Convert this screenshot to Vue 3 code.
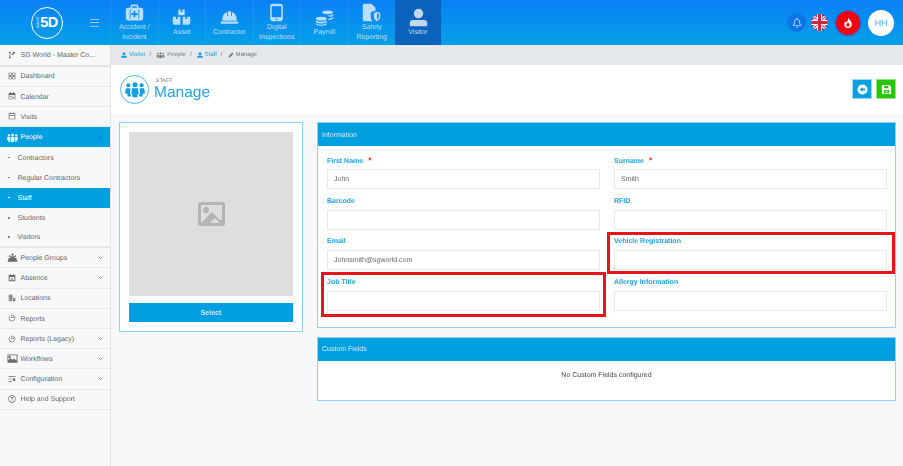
<script setup>
const icons = {
  case: 'M9 2h6a2 2 0 0 1 2 2v2h3a3 3 0 0 1 3 3v10a3 3 0 0 1-3 3H4a3 3 0 0 1-3-3V9a3 3 0 0 1 3-3h3V4a2 2 0 0 1 2-2zm0 2v2h6V4zM6 8v12h1V8zm11 0v12h1V8zM11 10v3H8v2h3v3h2v-3h3v-2h-3v-3z',
  boxes: 'M8 2h3v3h2V2h3v7H8zM1 11h4v3h2v-3h3.5v10H3a2 2 0 0 1-2-2zm12.5 0H17v3h2v-3h4v8a2 2 0 0 1-2 2h-7.500z',
  hat: 'M10 4h4v6h1V5c3.500 1 6 4 6 9v2H3v-2c0-5 2.500-8 6-9v5h1zM1 17h22v3H1z',
  phone: 'M7 1h10a3 3 0 0 1 3 3v16a3 3 0 0 1-3 3H7a3 3 0 0 1-3-3V4a3 3 0 0 1 3-3zm-1 3v14h12V4zm6 15.500a1.200 1.200 0 1 0 0 2.400 1.200 1.200 0 0 0 0-2.400z',
  coins: 'M16 3c4 0 7 1 7 2.500S20 8 16 8s-7-1-7-2.500S12 3 16 3zm7 4.500V9c0 1-1.500 1.900-4 2.200-1-.8-2.500-1.300-4-1.500 3.500 0 6.500-.8 8-2.200zM8 11c4 0 7 1.100 7 2.500S12 16 8 16s-7-1.100-7-2.500S4 11 8 11zm-7 4.500C2.500 17 5 17.500 8 17.500s5.500-.5 7-2V17c0 1.400-3 2.500-7 2.500S1 18.400 1 17zm0 3.500c1.500 1.400 4 2 7 2s5.500-.6 7-2v1c0 1.400-3 2.500-7 2.500S1 21.400 1 20zM23 11v2c0 1-1.500 1.800-6 2.300v-2c3 0 5-.9 6-2.300z',
  safety: 'M3 1h9l5 5v3.500l-6 2.300V17c0 2 .7 4 2 6H3a2 2 0 0 1-2-2V3a2 2 0 0 1 2-2zm16 10 4 1.500V17c0 3-1.800 5-4 6-2.200-1-4-3-4-6v-4.500zm0 2v8c1.300-.8 2.300-2.200 2.300-4v-3.200z',
  person: 'M12 1a6 6 0 1 1 0 12 6 6 0 0 1 0-12zM5 15h14a4 4 0 0 1 4 4v4H1v-4a4 4 0 0 1 4-4z',
  people: 'M12 4a3 3 0 1 1 0 6 3 3 0 0 1 0-6zM4 5a2.500 2.500 0 1 1 0 5 2.500 2.500 0 0 1 0-5zm16 0a2.500 2.500 0 1 1 0 5 2.500 2.500 0 0 1 0-5zM8.500 11h7l1 7-1.500.5V22H9v-3.500L7.500 18zM1 11h5.500L6 18l1 .5V21H3v-3l-3-1zm16.500 0H23l1 6-3 1v3h-4v-2.500l1-.5z',
  branch: 'M3 2h5v5H6.500v10H8v5H3v-5h1.500V7H3zM14 3h7v2l-3 4h-2v3h-6v-2h4V9z',
  grid: 'M2 2h9v9H2zm2 2v5h5V4zM13 2h9v9h-9zm2 2v5h5V4zM2 13h9v9H2zm2 2v5h5v-5zM13 13h9v9h-9zm2 2v5h5v-5z',
  cal: 'M6 1h3v2h6V1h3v2h3a1 1 0 0 1 1 1v17a1 1 0 0 1-1 1H3a1 1 0 0 1-1-1V4a1 1 0 0 1 1-1h3zM4 9v11h16V9zm3 2h4v4H7zm6 3h4v4h-4z',
  visits: 'M6 1h2v3h8V1h2v3h4v18H2V4h4zM4 6v3h16V6zm0 5v9h16v-9z',
  groups: 'M12 3a2.500 2.500 0 1 1 0 5 2.500 2.500 0 0 1 0-5zM6 7a2 2 0 1 1 0 4 2 2 0 0 1 0-4zm12 0a2 2 0 1 1 0 4 2 2 0 0 1 0-4zM9 9h6l2 4h3l3 8H1l3-8h3z',
  absence: 'M6 1h3v2h6V1h3v2h4v19H2V3h4zM5 9v10h14V9zm4 2 3 2 3-2v2l-2 1.500 2 1.500v2l-3-2-3 2v-2l2-1.500L9 13z',
  loc: 'M2 2h11v20H2zm2 2v3h2V4zm4 0v3h2V4zM4 9v3h2V9zm4 0v3h2V9zm-4 5v6h2v-6zm4 0v6h2v-6zm7-3h7v11h-7zm2 2v2h3v-2zm0 4v2h3v-2z',
  report: 'M12 2a10 10 0 1 1-7 2.900L6.400 6.300A8 8 0 1 0 12 4v6h6v2h-8V2z',
  flow: 'M1 3h22v18H1zm2 2v11l5-5 4 4 3-3 6 5V5zm3 1a2.500 2.500 0 1 1 0 5 2.500 2.500 0 0 1 0-5z',
  config: 'M2 4h20v2H2zM2 11h10v2H2zM2 18h10v2H2zM18 10a4 4 0 1 1 0 8 4 4 0 0 1 0-8z',
  help: 'M12 1a11 11 0 1 1 0 22 11 11 0 0 1 0-22zm0 2a9 9 0 1 0 0 18 9 9 0 0 0 0-18zm0 3c2.500 0 4 1.400 4 3.300 0 2.700-3 2.800-3 5h-2c0-3.300 3-3.300 3-5 0-.8-.8-1.300-2-1.300s-2 .6-2 1.700H8C8 7.500 9.500 6 12 6zm-1 10h2v2h-2z',
  pencil: 'M17 2l5 5L8 21l-6 1 1-6z'
}

const modules = [
  { icon: 'case', label: ['Accident /', 'Incident'] },
  { icon: 'boxes', label: ['Asset'] },
  { icon: 'hat', label: ['Contractor'] },
  { icon: 'phone', label: ['Digital', 'Inspections'] },
  { icon: 'coins', label: ['Payroll'] },
  { icon: 'safety', label: ['Safety', 'Reporting'] },
  { icon: 'person', label: ['Visitor'], active: true }
]

const menu = [
  { icon: 'grid', label: 'Dashboard' },
  { icon: 'cal', label: 'Calendar' },
  { icon: 'visits', label: 'Visits' },
  { icon: 'people', label: 'People', arrow: true, open: true, wide: true },
  { sub: true, label: 'Contractors' },
  { sub: true, label: 'Regular Contractors' },
  { sub: true, label: 'Staff', open: true },
  { sub: true, label: 'Students' },
  { sub: true, label: 'Visitors', last: true },
  { icon: 'groups', label: 'People Groups', arrow: true, wide: true },
  { icon: 'absence', label: 'Absence', arrow: true },
  { icon: 'loc', label: 'Locations' },
  { icon: 'report', label: 'Reports' },
  { icon: 'report', label: 'Reports (Legacy)', arrow: true },
  { icon: 'flow', label: 'Workflows', arrow: true, wide: true },
  { icon: 'config', label: 'Configuration', arrow: true },
  { icon: 'help', label: 'Help and Support' }
]

const crumbs = [
  { icon: 'person', label: 'Visitor', link: true },
  { icon: 'people', label: 'People', wide: true },
  { icon: 'person', label: 'Staff', link: true },
  { icon: 'pencil', label: 'Manage', end: true }
]

const fields = [
  { label: 'First Name', value: 'John', required: true },
  { label: 'Surname', value: 'Smith', required: true },
  { label: 'Barcode', value: '' },
  { label: 'RFID', value: '' },
  { label: 'Email', value: 'Johnsmith@sgworld.com' },
  { label: 'Vehicle Registration', value: '', mark: 'mark-right' },
  { label: 'Job Title', value: '', mark: 'mark-left' },
  { label: 'Allergy Information', value: '' }
]
</script>

<template>
  <div class="page">
    <header class="topbar">
      <div class="brand">
        <div class="logo">
          <span class="logo-small">SMART</span>
          <span class="logo-big">5D</span>
        </div>
        <div class="burger"><i></i><i></i><i></i></div>
      </div>
      <nav class="modules">
        <a v-for="m in modules" :key="m.icon" class="module" :class="{ active: m.active }">
          <svg class="module-icon" viewBox="0 0 24 24"><path :d="icons[m.icon]" fill="currentColor" fill-rule="evenodd" /></svg>
          <span class="module-label"><span v-for="l in m.label" :key="l">{{ l }}</span></span>
        </a>
      </nav>
      <div class="top-right">
        <span class="bell">
          <svg width="10" height="11" viewBox="0 0 24 24"><path d="M12 1a2 2 0 0 1 2 2v.500c3.500 1 5.500 4 5.500 7.500 0 4 1 5.500 3 7.500v1.500h-21v-1.500c2-2 3-3.500 3-7.500 0-3.500 2-6.500 5.500-7.500V3a2 2 0 0 1 2-2zm0 4.500c-3 0-5 2.500-5 5.500 0 3-.5 5-1.500 7h13c-1-2-1.500-4-1.500-7 0-3-2-5.500-5-5.500zM9 21.500h6a3 3 0 0 1-6 0z" fill="#9fd0ff" fill-rule="evenodd" /></svg>
        </span>
        <svg class="flag" viewBox="0 0 16 16">
          <defs><clipPath id="flag-clip"><circle cx="8" cy="8" r="8" /></clipPath></defs>
          <g clip-path="url(#flag-clip)">
            <rect width="16" height="16" fill="#2b3a78" />
            <path d="M0 0 16 16M16 0 0 16" stroke="#fff" stroke-width="3" />
            <path d="M0 0 16 16M16 0 0 16" stroke="#d8233c" stroke-width="1" />
            <path d="M8 0V16M0 8H16" stroke="#fff" stroke-width="5" />
            <path d="M8 0V16M0 8H16" stroke="#d8233c" stroke-width="3" />
          </g>
        </svg>
        <span class="drop">
          <svg width="10" height="12" viewBox="0 0 24 28"><path d="M13 1c1 5 8 8 8 16a9 9 0 0 1-18 0c0-4 2-6 4-8 0 2 1 3 2 4 2-3 3-7 4-12zm-1 12c-1 2-4 3-4 6a4 4 0 0 0 8 0c0-3-3-4-4-6z" fill="#fff" fill-rule="evenodd" /></svg>
        </span>
        <span class="avatar">HH</span>
      </div>
    </header>

    <div class="below">
      <aside class="sidebar">
        <div class="company">
          <svg class="side-icon" viewBox="0 0 24 24"><path :d="icons.branch" fill="currentColor" /></svg>
          <span class="side-label">SG World - Master Co...</span>
        </div>
        <a
          v-for="item in menu"
          :key="item.label"
          class="side-row"
          :class="{ sub: item.sub, open: item.open, last: item.last }"
        >
          <span v-if="item.sub" class="dot"></span>
          <svg v-else class="side-icon" :class="{ wide: item.wide }" viewBox="0 0 24 24"><path :d="icons[item.icon]" fill="currentColor" fill-rule="evenodd" /></svg>
          <span class="side-label">{{ item.label }}</span>
          <svg v-if="item.arrow" class="chev" viewBox="0 0 10 6"><path d="M1 1l4 4 4-4" fill="none" stroke="currentColor" stroke-width="1.400" /></svg>
        </a>
      </aside>

      <main class="main">
        <div class="crumbs">
          <span v-for="c in crumbs" :key="c.label" class="crumb" :class="{ link: c.link }">
            <svg class="crumb-icon" :class="{ wide: c.wide }" viewBox="0 0 24 24"><path :d="icons[c.icon]" fill="currentColor" fill-rule="evenodd" /></svg>
            {{ c.label }}
            <em v-if="!c.end">/</em>
          </span>
        </div>

        <div class="page-head">
          <div class="head-icon">
            <svg width="20" height="20" viewBox="0 0 24 24"><path :d="icons.people" fill="#0d9fe0" /></svg>
          </div>
          <div class="head-text">
            <small>STAFF</small>
            <h1>Manage</h1>
          </div>
          <div class="head-actions">
            <button class="act back">
              <svg width="11" height="11" viewBox="0 0 24 24"><path d="M12 1a11 11 0 1 1 0 22 11 11 0 0 1 0-22zM12 7l-6 5 6 5v-3h6v-4h-6z" fill="#fff" fill-rule="evenodd" /></svg>
            </button>
            <button class="act save">
              <svg width="11" height="11" viewBox="0 0 24 24"><path d="M3 2h15l4 4v16H2V3a1 1 0 0 1 1-1zm4 2v5h9V4zM6 13v7h12v-7zm6 1.500a2 2 0 1 1 0 4 2 2 0 0 1 0-4z" fill="#fff" fill-rule="evenodd" /></svg>
            </button>
          </div>
        </div>

        <div class="content">
          <section class="photo-card">
            <div class="photo">
              <svg width="27" height="24" viewBox="0 0 27 24">
                <rect x="1.500" y="1.500" width="24" height="21" rx="1" fill="none" stroke="#b5b5b5" stroke-width="3" />
                <circle cx="8" cy="8" r="3" fill="#b5b5b5" />
                <path d="M3 21 14 10l8 8 3 0v4H3z" fill="#b5b5b5" />
                <path d="M12 21l5-5 5 5z" fill="#dedede" />
              </svg>
            </div>
            <button class="select-btn">Select</button>
          </section>

          <div class="forms">
            <section class="card">
              <div class="card-head">Information</div>
              <div class="form-grid">
                <div v-for="f in fields" :key="f.label" class="field">
                  <label>{{ f.label }}<b v-if="f.required">*</b></label>
                  <input type="text" :value="f.value" />
                  <span v-if="f.mark" class="mark" :class="f.mark"></span>
                </div>
              </div>
            </section>

            <section class="card">
              <div class="card-head">Custom Fields</div>
              <div class="custom-empty">No Custom Fields configured</div>
            </section>
          </div>
        </div>
      </main>
    </div>
  </div>
</template>

<style>
html, body { margin: 0; background: #f7f8fa; }
</style>

<style scoped>
.page {
  width: 903px;
  height: 466px;
  overflow: hidden;
  font-family: "Liberation Sans", Arial, sans-serif;
  font-size: 7px;
  color: #555;
  text-rendering: geometricPrecision;
  filter: blur(0.3px);
  display: flex;
  flex-direction: column;
}

.topbar {
  height: 45px;
  flex: none;
  display: flex;
  background: linear-gradient(180deg, #0a80f6 0%, #04a0e6 100%);
  color: rgba(255,255,255,0.72);
}
.brand { width: 110px; display: flex; align-items: center; flex: none; padding-left: 31px; box-sizing: border-box; }
.logo {
  width: 32px;
  height: 32px;
  box-sizing: border-box;
  border: 1.500px solid #fff;
  border-radius: 50%;
  display: flex;
  align-items: center;
  justify-content: center;
  color: #fff;
}
.logo-small { writing-mode: vertical-rl; transform: rotate(180deg); font-size: 3.500px; }
.logo-big { font-size: 14.500px; font-weight: 700; letter-spacing: -0.500px; }
.burger { margin-left: 27px; display: flex; flex-direction: column; gap: 2.500px; width: 9px; }
.burger i { height: 1px; background: rgba(255,255,255,0.5); }

.modules { display: flex; }
.module {
  width: 47.500px;
  box-sizing: border-box;
  border-left: 1px solid rgba(255,255,255,0.08);
  display: flex;
  flex-direction: column;
  align-items: center;
  justify-content: center;
  padding-top: 1px;
}
.module.active { background: #0b62bd; color: rgba(255,255,255,0.75); width: 46px; border-left: 0; }
.module-icon { width: 19px; height: 19px; flex: none; }
.module-label {
  display: flex;
  flex-direction: column;
  align-items: center;
  line-height: 10px;
  font-size: 7px;
  margin-top: 1.500px;
}

.top-right { margin-left: auto; display: flex; align-items: center; padding-right: 9px; }
.bell {
  width: 19px;
  height: 19px;
  border-radius: 50%;
  background: #0f74e6;
  display: flex;
  align-items: center;
  justify-content: center;
}
.flag { width: 17px; height: 17px; margin-left: 5px; }
.drop {
  width: 24px;
  height: 24px;
  margin-left: 8px;
  border-radius: 50%;
  background: #f5000f;
  box-shadow: 0 0 0 1.500px #0f74e6;
  display: flex;
  align-items: center;
  justify-content: center;
}
.avatar {
  width: 26px;
  height: 26px;
  margin-left: 8px;
  border-radius: 50%;
  background: #fff;
  color: #5cb2e4;
  font-size: 9px;
  display: flex;
  align-items: center;
  justify-content: center;
}

.below { flex: 1; display: flex; min-height: 0; }

.sidebar {
  width: 111px;
  flex: none;
  box-sizing: border-box;
  background: #f7f8fa;
  border-right: 1px solid #e2e4e7;
}
.company {
  height: 21.500px;
  box-sizing: border-box;
  display: flex;
  align-items: center;
  padding-left: 7px;
  border-bottom: 2px solid #e2e4e7;
  color: #666;
}
.side-row {
  height: 20.200px;
  box-sizing: border-box;
  display: flex;
  align-items: center;
  padding: 0 6px 0 7px;
  border-bottom: 1px solid #e6e8ea;
  color: #666;
}
.side-label { margin-top: 1.500px; }
.side-icon { width: 8px; height: 8px; flex: none; color: #6a6a6a; margin: 0 4.500px 0 1px; }
.side-icon.wide { width: 11px; height: 11px; margin: 0 2.500px 0 0; }
.side-row.sub { border-bottom: 0; padding-left: 8px; }
.side-row.sub.last { border-bottom: 2px solid #e6e8ea; }
.side-row.sub .side-label { margin-left: 8px; }
.dot { width: 1.500px; height: 1.500px; background: #777; border-radius: 50%; flex: none; }
.side-row.open { background: #009fe0; color: #fff; border-bottom: 0; }
.side-row.open .side-icon { color: #fff; }
.side-row.open .dot { background: #fff; }
.chev { width: 5px; height: 3px; margin-left: auto; margin-right: 1px; color: #666; }
.side-row.open .chev { color: #0a6fa5; }

.main { flex: 1; min-width: 0; display: flex; flex-direction: column; }
.crumbs {
  height: 20px;
  flex: none;
  box-sizing: border-box;
  background: #e6e9ec;
  display: flex;
  align-items: center;
  padding-left: 10px;
  font-size: 6px;
  color: #777;
}
.crumb { display: flex; align-items: center; gap: 2px; margin-right: 5px; }
.crumb.link { color: #1a9fe0; }
.crumb em { font-style: normal; color: #777; margin-left: 2px; }
.crumb-icon { width: 6px; height: 6px; }
.crumb-icon.wide { width: 9px; height: 8px; }

.page-head {
  height: 48px;
  flex: none;
  background: #fff;
  display: flex;
  align-items: center;
  padding: 0 7px 0 9px;
  box-sizing: border-box;
}
.head-icon {
  width: 29px;
  height: 29px;
  box-sizing: border-box;
  border: 1.500px solid #4db6e8;
  border-radius: 50%;
  display: flex;
  align-items: center;
  justify-content: center;
}
.head-text { margin-left: 5px; margin-top: 1px; }
.head-text small { display: block; font-size: 5px; color: #666; letter-spacing: 0.300px; margin-left: 2px; line-height: 6px; }
.head-text h1 { margin: 0; font-size: 15.500px; font-weight: 400; color: #23a3e3; line-height: 17px; }
.head-actions { margin-left: auto; display: flex; gap: 4px; }
.act {
  width: 20px;
  height: 20px;
  padding: 0;
  border: 1px solid #9bd8f3;
  display: flex;
  align-items: center;
  justify-content: center;
}
.act.back { background: #07a0e0; }
.act.save { background: #2bc40a; border-color: #95e485; }

.content {
  flex: 1;
  background: #f7f8fa;
  display: flex;
  align-items: flex-start;
  gap: 14px;
  padding: 9px 7px 0 8px;
}
.photo-card {
  width: 184px;
  flex: none;
  box-sizing: border-box;
  background: #fff;
  border: 1px solid #8ed4f2;
  padding: 9px;
}
.photo {
  height: 164px;
  background: #dedede;
  display: flex;
  align-items: center;
  justify-content: center;
}
.select-btn {
  display: block;
  width: 100%;
  height: 19px;
  margin-top: 7px;
  padding: 0;
  border: 0;
  background: #009fe0;
  color: #cdeefc;
  font-family: inherit;
  font-size: 7px;
  font-weight: 700;
}

.forms { flex: 1; min-width: 0; display: flex; flex-direction: column; gap: 9px; }
.card { background: #fff; border: 1px solid #8ed4f2; }
.card-head {
  height: 23px;
  box-sizing: border-box;
  background: #009fe0;
  color: #d5f0fc;
  display: flex;
  align-items: center;
  padding: 1px 0 0 4px;
}
.form-grid {
  display: grid;
  grid-template-columns: 273px 273px;
  column-gap: 14px;
  row-gap: 7.500px;
  padding: 10px 8px 16px 9px;
}
.field { position: relative; display: flex; flex-direction: column; }
.field label {
  height: 13px;
  line-height: 10px;
  font-weight: 700;
  color: #1a9fe0;
}
.field label b { color: #f0141e; margin-left: 5px; font-size: 8px; }
.field input {
  width: 100%;
  height: 20px;
  box-sizing: border-box;
  border: 1px solid #e8e8e8;
  background: #fff;
  padding: 1px 6px 0;
  font-family: inherit;
  font-size: 7px;
  color: #666;
  outline: none;
  text-rendering: geometricPrecision;
}
.mark { position: absolute; border: 3px solid #e8141c; }
.mark-left { inset: -6px -6px -6px -6px; }
.mark-right { inset: -5px -8px -4px -7px; }

.custom-empty {
  height: 39px;
  box-sizing: border-box;
  padding-top: 10px;
  line-height: 9px;
  text-align: center;
  color: #444;
}
</style>
